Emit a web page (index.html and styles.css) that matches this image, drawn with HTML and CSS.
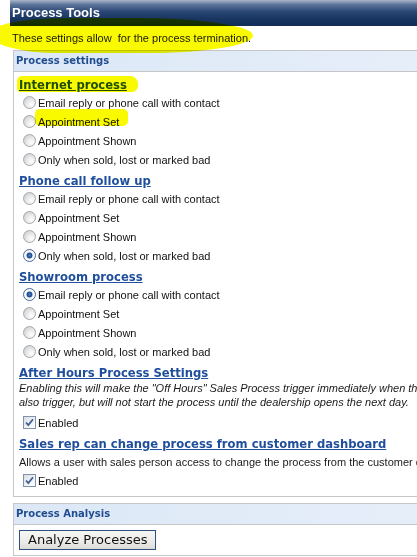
FILE: index.html
```html
<!DOCTYPE html>
<html>
<head>
<meta charset="utf-8">
<title>Process Tools</title>
<link rel="stylesheet" href="styles.css">
</head>
<body>
<div class="page">
  <div class="title-bar">Process Tools</div>
  <p class="intro">These settings allow&nbsp; for the process termination.</p>

  <section class="panel">
    <div class="panel-head">Process settings</div>
    <div class="panel-body">
      <div class="group">
        <a class="group-title" href="#">Internet process</a>
        <label class="opt"><input type="radio" name="internet"><span>Email reply or phone call with contact</span></label>
        <label class="opt"><input type="radio" name="internet"><span>Appointment Set</span></label>
        <label class="opt"><input type="radio" name="internet"><span>Appointment Shown</span></label>
        <label class="opt"><input type="radio" name="internet"><span>Only when sold, lost or marked bad</span></label>
      </div>
      <div class="group">
        <a class="group-title" href="#">Phone call follow up</a>
        <label class="opt"><input type="radio" name="phone"><span>Email reply or phone call with contact</span></label>
        <label class="opt"><input type="radio" name="phone"><span>Appointment Set</span></label>
        <label class="opt"><input type="radio" name="phone"><span>Appointment Shown</span></label>
        <label class="opt"><input type="radio" name="phone" checked><span>Only when sold, lost or marked bad</span></label>
      </div>
      <div class="group">
        <a class="group-title" href="#">Showroom process</a>
        <label class="opt"><input type="radio" name="showroom" checked><span>Email reply or phone call with contact</span></label>
        <label class="opt"><input type="radio" name="showroom"><span>Appointment Set</span></label>
        <label class="opt"><input type="radio" name="showroom"><span>Appointment Shown</span></label>
        <label class="opt"><input type="radio" name="showroom"><span>Only when sold, lost or marked bad</span></label>
      </div>
      <div class="group">
        <a class="group-title" href="#">After Hours Process Settings</a>
        <p class="note italic"><span class="line">Enabling this will make the "Off Hours" Sales Process trigger immediately when the lead arrives. Leads received after hours will</span><span class="line">also trigger, but will not start the process until the dealership opens the next day.</span></p>
        <label class="opt check-row"><span class="check"><svg width="9" height="9" viewBox="0 0 9 9"><path d="M1 4.5 L3.3 7 L8 1.2" fill="none" stroke="#3f5f95" stroke-width="1.8"/></svg></span><span>Enabled</span></label>
      </div>
      <div class="group group-last">
        <a class="group-title" href="#">Sales rep can change process from customer dashboard</a>
        <p class="note"><span class="line">Allows a user with sales person access to change the process from the customer dashboard.</span></p>
        <label class="opt check-row"><span class="check"><svg width="9" height="9" viewBox="0 0 9 9"><path d="M1 4.5 L3.3 7 L8 1.2" fill="none" stroke="#3f5f95" stroke-width="1.8"/></svg></span><span>Enabled</span></label>
      </div>
    </div>
  </section>

  <section class="panel panel-analysis">
    <div class="panel-head">Process Analysis</div>
    <div class="panel-body">
      <button class="btn" type="button">Analyze Processes</button>
    </div>
  </section>

  <span class="marker marker-intro"></span>
  <span class="marker marker-title"></span>
  <span class="marker marker-opt"></span>
</div>
</body>
</html>
```

FILE: styles.css
```css
html, body {
  margin: 0;
  padding: 0;
  overflow: hidden;
  background: #ffffff;
}

.page {
  position: relative;
  width: 720px;
  padding-left: 10px;
  font-family: "Liberation Sans", Arial, sans-serif;
  font-size: 11px;
  color: #111;
}

.title-bar {
  height: 26px;
  line-height: 26px;
  padding-left: 2px;
  font-size: 13px;
  font-weight: bold;
  color: #ffffff;
  background: linear-gradient(#aab6c8 0%, #5a7399 18%, #2a4674 45%, #17335f 75%, #132d58 100%);
}

.intro {
  margin: 0;
  padding: 6px 2px 5px;
  line-height: 13px;
  font-size: 11px;
  color: #1a1a1a;
}

.panel {
  margin-left: 3px;
  border: 1px solid #c6c6c6;
}

.panel-head {
  height: 20px;
  line-height: 20px;
  padding-left: 2px;
  border-bottom: 1px solid #c6c6c6;
  background: linear-gradient(90deg, #dce8f7 0%, #e6eef9 60%, #edf3fb 100%);
  font-family: "DejaVu Sans", Verdana, sans-serif;
  font-size: 10px;
  font-weight: bold;
  color: #1f4d8f;
}

.panel-body {
  padding: 1px 5px 6px;
}

.group {
  display: flex;
  flex-direction: column;
  align-items: flex-start;
  padding-top: 4px;
}

.group-title {
  font-family: "DejaVu Sans", Verdana, sans-serif;
  font-size: 11.6px;
  font-weight: bold;
  line-height: 16px;
  color: #1f4f9c;
  text-decoration: underline;
}

.opt {
  display: flex;
  align-items: center;
  height: 19px;
  gap: 2px;
  color: #111;
}

.opt input[type="radio"] {
  appearance: none;
  -webkit-appearance: none;
  width: 13px;
  height: 13px;
  margin: 0 0 0 4px;
  border-radius: 50%;
  border: 1px solid #a3a9b0;
  background: radial-gradient(circle at 68% 70%, #ffffff 0%, #eeeeee 35%, #d0d2d4 80%, #c2c4c6 100%);
  box-sizing: border-box;
}

.opt input[type="radio"]:checked {
  border-color: #4c6c98;
  background: radial-gradient(circle at 50% 50%, #5a86c6 0%, #1f4f96 26%, #24508f 34%, #e2e8ef 42%, #ffffff 60%, #cdd3d9 100%);
}

.note {
  margin: 0;
  line-height: 14px;
  color: #1a1a1a;
}

.note .line {
  display: block;
  white-space: nowrap;
}

.italic {
  font-style: italic;
}

.check-row {
  margin-top: 4px;
}

.group-last .note {
  margin-top: 3px;
}

.group-last .check-row {
  margin-top: 2px;
}

.check {
  display: flex;
  align-items: center;
  justify-content: center;
  width: 13px;
  height: 13px;
  margin-left: 4px;
  box-sizing: border-box;
  border: 1px solid #7f93ac;
  background: linear-gradient(135deg, #d9dde3 0%, #eef0f3 50%, #ffffff 100%);
}

.panel-analysis {
  margin-top: 6px;
}

.panel-analysis .panel-body {
  padding: 5px 5px 5px;
}

.btn {
  display: block;
  height: 20px;
  padding: 0 8px;
  border: 1px solid #2d4f82;
  background: linear-gradient(#f6f6f4 0%, #ecebe8 60%, #dcdbd7 100%);
  font-family: "DejaVu Sans", Verdana, sans-serif;
  font-size: 13px;
  color: #111;
  line-height: 18px;
}

.marker {
  position: absolute;
  background: #f9f900;
  mix-blend-mode: multiply;
  pointer-events: none;
}

.marker-intro {
  left: -8px;
  top: 18px;
  width: 261px;
  height: 35px;
  border-radius: 30% 45% 40% 25% / 40% 50% 50% 50%;
}

.marker-title {
  left: 17px;
  top: 76px;
  width: 121px;
  height: 16px;
  border-radius: 5px 8px 6px 4px;
}

.marker-opt {
  left: 35px;
  top: 109px;
  width: 93px;
  height: 17px;
  border-radius: 5px;
}
```
